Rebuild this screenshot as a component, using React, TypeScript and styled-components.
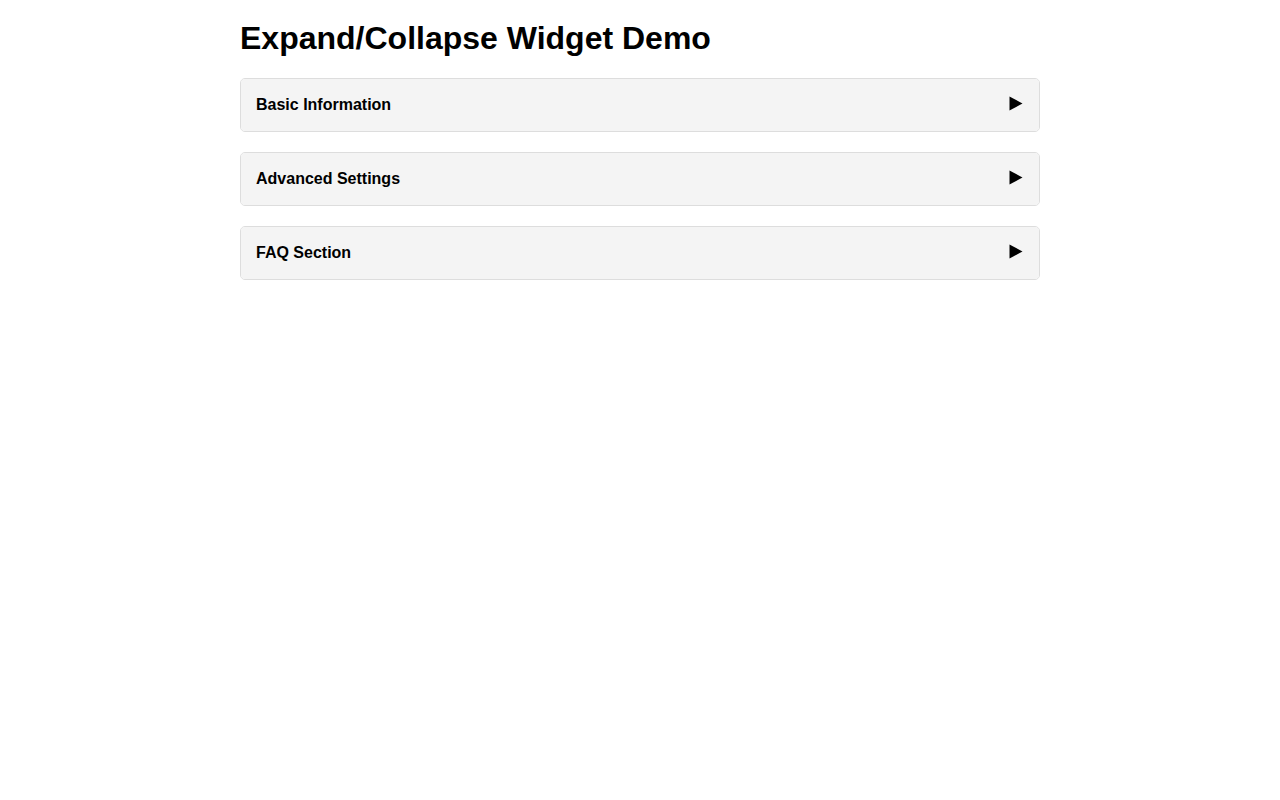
import { useState } from "react";
import styled, { createGlobalStyle } from "styled-components";

const GlobalStyle = createGlobalStyle`
    body {
        margin: 0;
        background: #ffffff;
        font-family: "Liberation Sans", Arial, sans-serif;
        color: #000000;
    }
`;

const Page = styled.div`
    max-width: 800px;
    margin: 0 auto;
    padding-top: 20px;
`;

const Title = styled.h1`
    font-size: 32px;
    font-weight: bold;
    margin: 0 0 21px;
`;

const Panel = styled.div`
    border: 1px solid #dddddd;
    border-radius: 5px;
    margin-bottom: 20px;
    overflow: hidden;
`;

const Header = styled.div`
    display: flex;
    align-items: center;
    justify-content: space-between;
    padding: 15px;
    background-color: #f4f4f4;
    font-weight: bold;
    font-size: 16px;
    line-height: 22px;
    cursor: pointer;
    user-select: none;
`;

const Arrow = styled.svg<{ open: boolean }>`
    width: 14px;
    height: 15px;
    margin: -3px 1px 0 0;
    transition: transform 0.2s;
    transform: rotate(${props => (props.open ? 90 : 0)}deg);
`;

const Body = styled.div`
    padding: 15px;
    border-top: 1px solid #dddddd;
    line-height: 1.5;
`;

const sections = [
    { title: "Basic Information", text: "Some basic details about the item go here." },
    { title: "Advanced Settings", text: "Options for experienced users live in this section." },
    { title: "FAQ Section", text: "Answers to frequently asked questions." },
];

const App = (): JSX.Element => {
    const [open, setOpen] = useState<number | null>(null);

    return <>
        <GlobalStyle />
        <Page>
            <Title>Expand/Collapse Widget Demo</Title>
            {sections.map((s, i) => (
                <Panel key={s.title}>
                    <Header onClick={() => setOpen(open === i ? null : i)}>
                        {s.title}
                        <Arrow open={open === i} viewBox="0 0 14 15">
                            <polygon points="0.5,0.5 13.5,7.5 0.5,14.5" fill="#000" />
                        </Arrow>
                    </Header>
                    {open === i && <Body>{s.text}</Body>}
                </Panel>
            ))}
        </Page>
    </>;
}

export default App;
